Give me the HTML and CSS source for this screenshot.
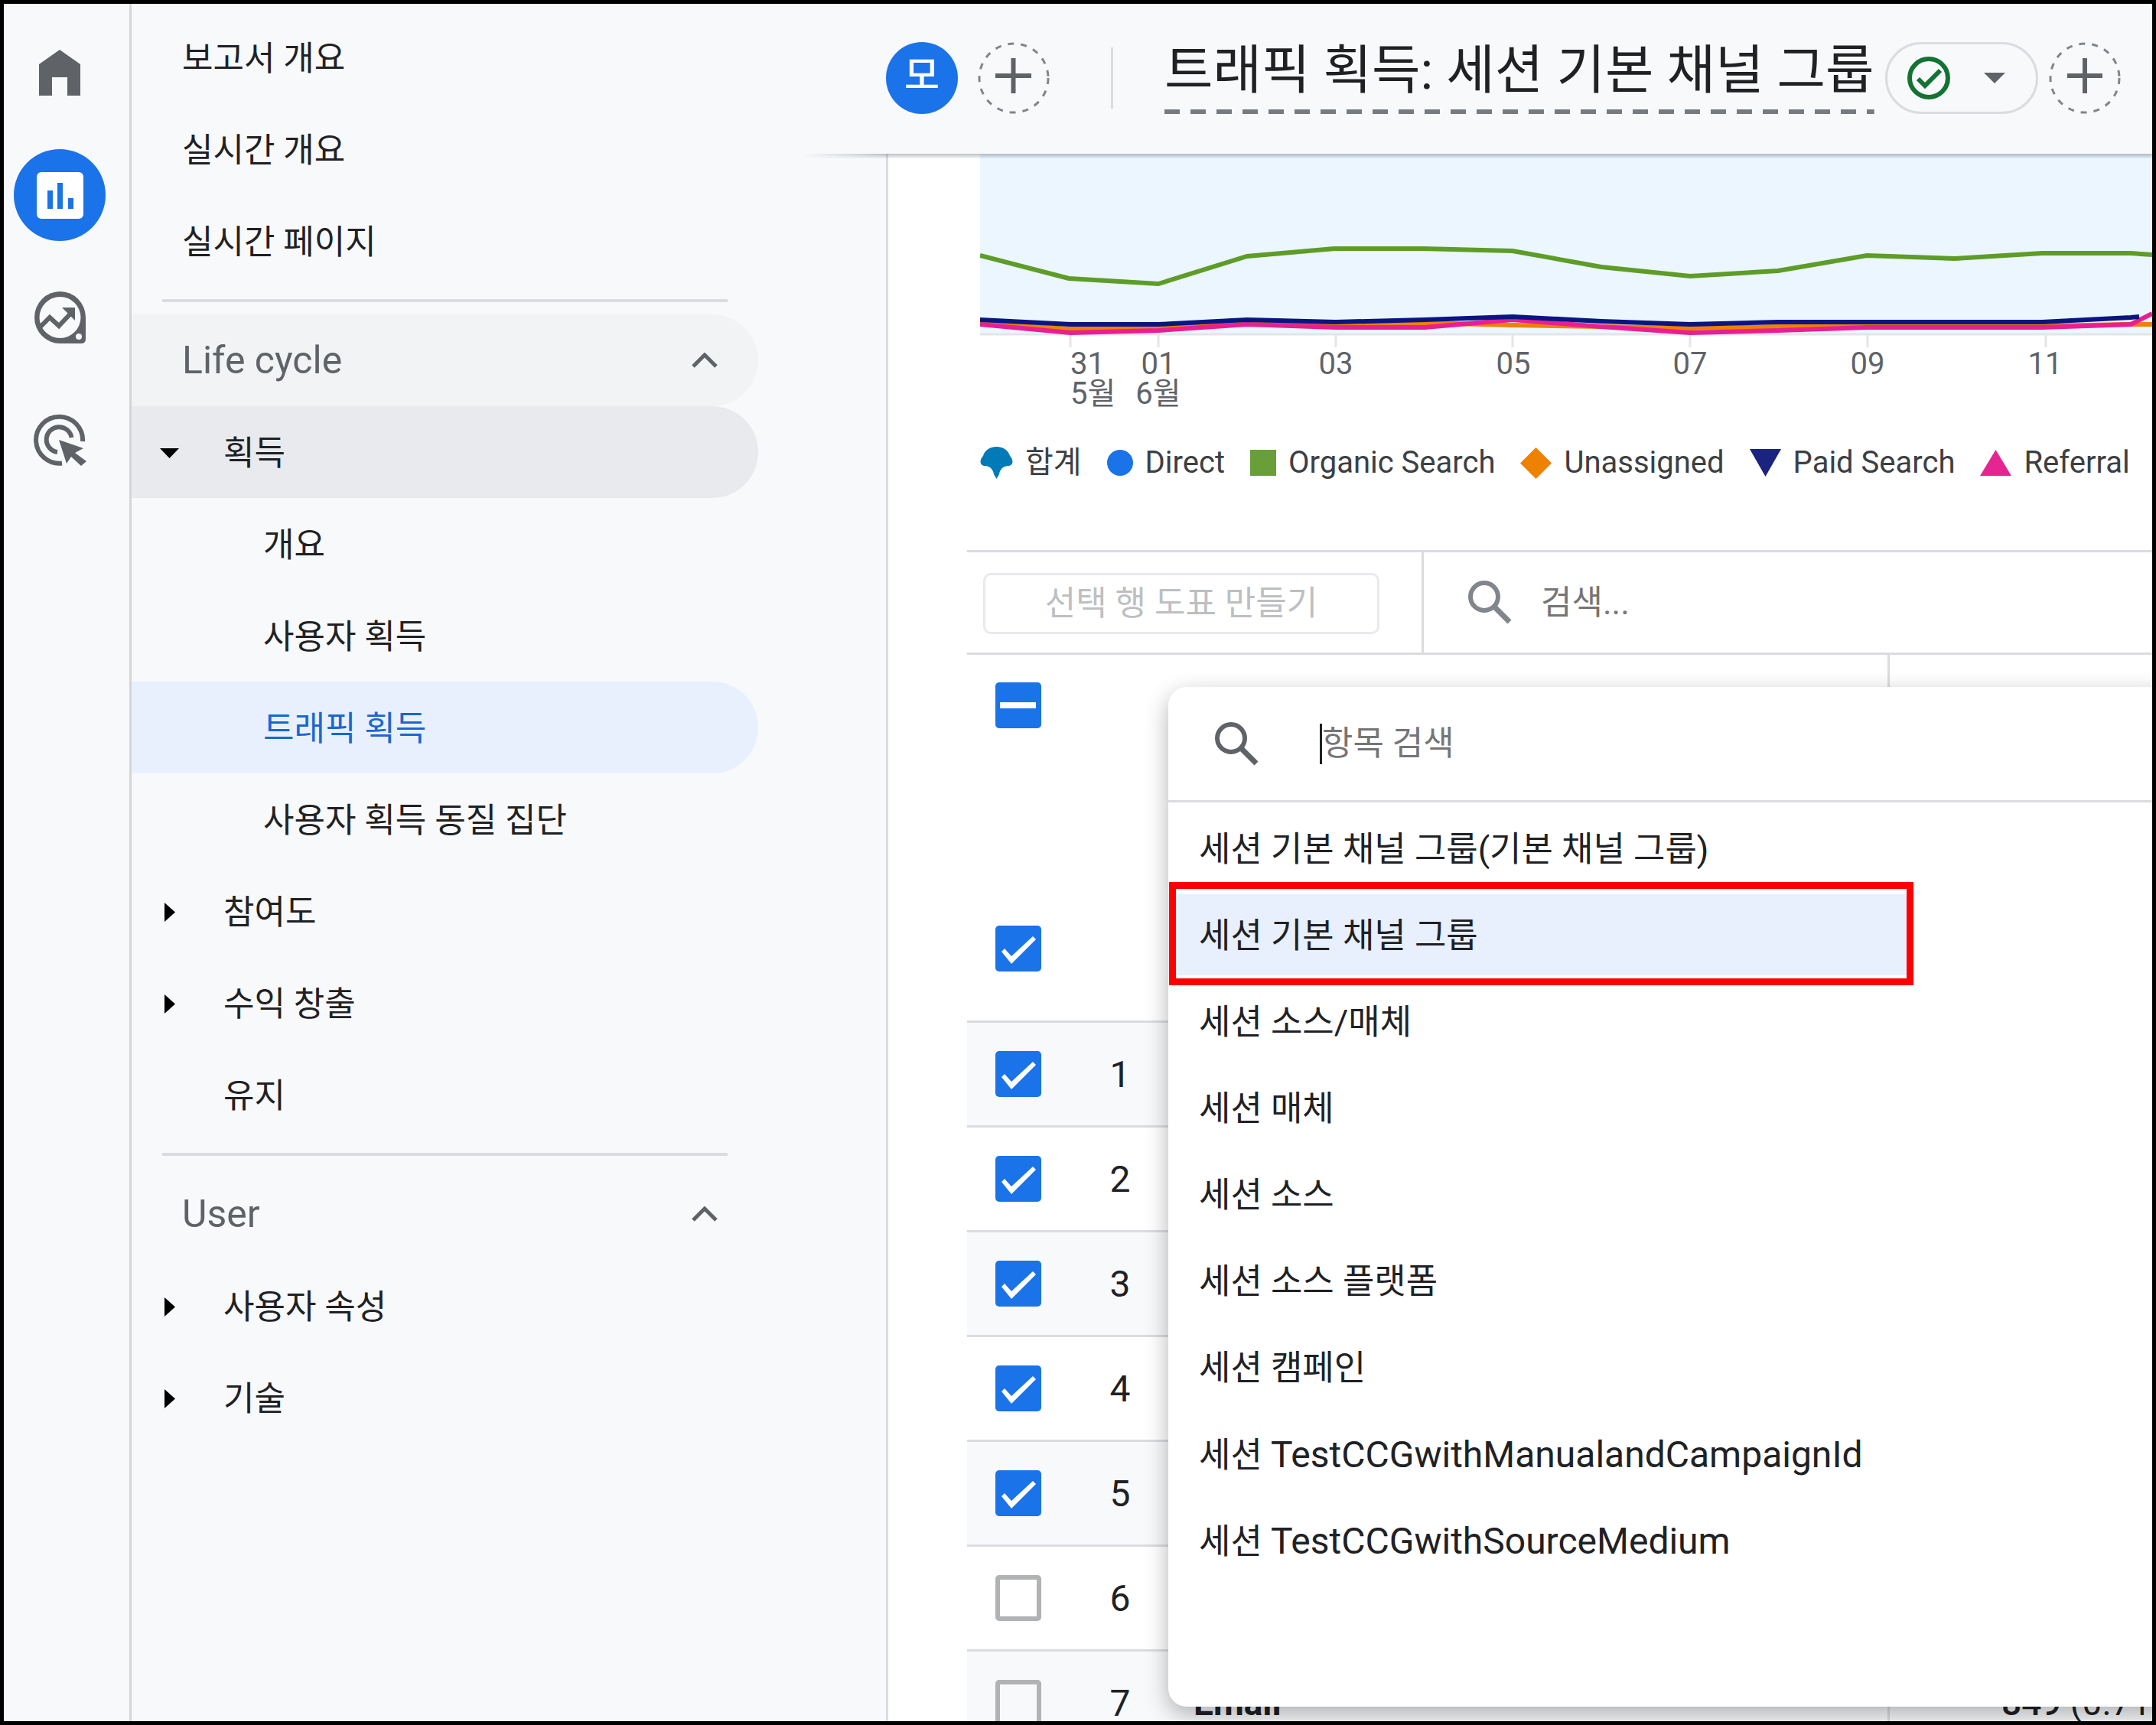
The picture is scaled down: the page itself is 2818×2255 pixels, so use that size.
FILE: index.html
```html
<!DOCTYPE html>
<html lang="ko">
<head>
    <meta charset="UTF-8">
    <meta name="viewport" content="width=device-width, initial-scale=1.0">
    <title>트래픽 획득</title>
    <link rel="stylesheet" href="styles.css">
</head>
<body>
    <aside class="rail">
        <button class="rail_button" aria-label="Home">
            <svg width="54" height="60" viewBox="0 0 54 60"><path d="M0 19 27 0l27 19v41H37V36H17v24H0z" fill="#5f6368"/></svg>
        </button>
        <button class="rail_button active" aria-label="Reports">
            <svg width="61" height="61" viewBox="0 0 61 61">
                <rect width="61" height="61" rx="6" fill="#fff"/>
                <path d="M14 24h7v24h-7zM27 14h7v34h-7zM41 34h7v14h-7z" fill="#1a73e8"/>
            </svg>
        </button>
        <button class="rail_button" aria-label="Explore">
            <svg width="67" height="68" viewBox="0 0 67 68">
                <path fill="#5f6368" fill-rule="evenodd" d="M33.500 0A33.500 34 0 0 0 33.500 68H61q6 0 6-6V34A33.500 34 0 0 0 33.500 0zM33.500 7a27 27 0 1 1 0 54a27 27 0 1 1 0-54z"/>
                <path d="M5 49 20 34l12 11 18-19" fill="none" stroke="#5f6368" stroke-width="6"/>
                <path d="M36 21h17v17z" fill="#5f6368"/>
                <circle cx="58" cy="59" r="4" fill="#f8f9fb"/>
            </svg>
        </button>
        <button class="rail_button" aria-label="Advertising">
            <svg width="69" height="68" viewBox="0 0 69 68">
                <g fill="none" stroke="#5f6368" stroke-width="6">
                    <path d="M64 36A30.500 30.500 0 1 0 37 64.500"/>
                    <path d="M49.500 31A16.500 16.500 0 1 0 31 50"/>
                </g>
                <path d="M33 34 65 45 54 51 69 62 62 68 49 56 43 65z" fill="#5f6368"/>
            </svg>
        </button>
    </aside>

    <nav class="side_nav">
        <a class="nav_item" href="#">보고서 개요</a>
        <a class="nav_item" href="#">실시간 개요</a>
        <a class="nav_item" href="#">실시간 페이지</a>
        <hr>
        <button class="nav_item nav_head hovered">
            Life cycle
            <svg width="34" height="20" viewBox="0 0 34 20"><path d="M2 18 17 3l15 15" fill="none" stroke="#5f6368" stroke-width="5"/></svg>
        </button>
        <a class="nav_item level1 open" href="#">
            <svg class="caret" width="25" height="13" viewBox="0 0 25 13"><path d="M0 0h25L12.500 13z"/></svg>획득
        </a>
        <a class="nav_item level2" href="#">개요</a>
        <a class="nav_item level2" href="#">사용자 획득</a>
        <a class="nav_item level2 selected" href="#">트래픽 획득</a>
        <a class="nav_item level2" href="#">사용자 획득 동질 집단</a>
        <a class="nav_item level1" href="#">
            <svg class="caret" width="25" height="25" viewBox="0 0 25 25"><path d="M6 0v25l14-12.500z"/></svg>참여도
        </a>
        <a class="nav_item level1" href="#">
            <svg class="caret" width="25" height="25" viewBox="0 0 25 25"><path d="M6 0v25l14-12.500z"/></svg>수익 창출
        </a>
        <a class="nav_item level1" href="#"><span class="caret"></span>유지</a>
        <hr>
        <button class="nav_item nav_head">
            User
            <svg width="34" height="20" viewBox="0 0 34 20"><path d="M2 18 17 3l15 15" fill="none" stroke="#5f6368" stroke-width="5"/></svg>
        </button>
        <a class="nav_item level1" href="#">
            <svg class="caret" width="25" height="25" viewBox="0 0 25 25"><path d="M6 0v25l14-12.500z"/></svg>사용자 속성
        </a>
        <a class="nav_item level1" href="#">
            <svg class="caret" width="25" height="25" viewBox="0 0 25 25"><path d="M6 0v25l14-12.500z"/></svg>기술
        </a>
    </nav>

    <main class="report">
        <header class="report_header">
            <button class="segment">모</button>
            <button class="add_button" aria-label="Add comparison">
                <svg width="94" height="94" viewBox="0 0 94 94">
                    <circle cx="47" cy="47" r="45" fill="none" stroke="#80868b" stroke-width="3" stroke-dasharray="8 9"/>
                    <path d="M23 44h47M46.500 21v46" stroke="#5f6368" stroke-width="6"/>
                </svg>
            </button>
            <span class="header_line"></span>
            <h1>트래픽 획득: 세션 기본 채널 그룹</h1>
            <button class="status" aria-label="Data quality">
                <svg width="56" height="56" viewBox="0 0 56 56">
                    <circle cx="28" cy="28" r="25" fill="none" stroke="#137333" stroke-width="6"/>
                    <path d="M14 29l9 9 20-20" fill="none" stroke="#137333" stroke-width="6"/>
                </svg>
                <svg width="28" height="14" viewBox="0 0 28 14"><path d="M0 0h28L14 14z" fill="#5f6368"/></svg>
            </button>
            <button class="add_button" aria-label="Add filter">
                <svg width="94" height="94" viewBox="0 0 94 94">
                    <circle cx="47" cy="47" r="45" fill="none" stroke="#80868b" stroke-width="3" stroke-dasharray="8 9"/>
                    <path d="M24 44h46M47 21v46" stroke="#5f6368" stroke-width="6"/>
                </svg>
            </button>
        </header>

        <section class="report_body">
            <div class="chart">
                <svg viewBox="0 0 1532 340">
                    <rect width="1532" height="236" fill="#ebf6fe"/>
                    <path d="M0 236h1532M118 236v17M233 236v17M465 236v17M696 236v17M928 236v17M1160 236v17M1393 236v17" stroke="#e3e5e8" stroke-width="3"/>
                    <g fill="none" stroke-width="6">
                        <polyline stroke="#5e9c28" points="0,133 116,163 233,170 349,134 463,124 579,124 696,127 812,148 928,160 1043,153 1159,133 1274,137 1388,130 1504,130 1532,132"/>
                        <polyline stroke="#ee8100" points="0,222 118,229 233,228 349,221 465,223 581,221 696,224 812,226 928,228 1043,226 1159,225 1388,225 1504,223 1532,223"/>
                        <polyline stroke="#e91e92" points="0,223 118,234 233,231 349,223 465,227 581,227 696,217 812,226 928,234 1043,231 1159,227 1388,227 1504,223 1532,209"/>
                        <polyline stroke="#0b1580" points="0,217 118,223 233,223 349,217 465,220 581,217 696,213 812,219 928,223 1043,220 1388,220 1504,214 1515,213"/>
                    </g>
                    <g class="axis_text">
                        <text x="118" y="288">31</text>
                        <text x="118" y="327">5월</text>
                        <g text-anchor="middle">
                            <text x="233" y="288">01</text>
                            <text x="233" y="327">6월</text>
                            <text x="465" y="288">03</text>
                            <text x="697" y="288">05</text>
                            <text x="928" y="288">07</text>
                            <text x="1160" y="288">09</text>
                            <text x="1392" y="288">11</text>
                        </g>
                    </g>
                </svg>
                <ul class="legend">
                    <li><svg width="43" height="42" viewBox="0 0 43 42"><path d="M21.500 0C31 0 37 5 39 12c5 5 5 13-3 13-7 1-10 5-11 11l-3.500 6L18 36C17 30 14 26 7 25c-8 0-8-8-3-13C6 5 12 0 21.500 0z" fill="#007bb8"/></svg>합계</li>
                    <li><svg width="34" height="34" viewBox="0 0 34 34"><circle cx="17" cy="17" r="17" fill="#1a73e8"/></svg>Direct</li>
                    <li><svg width="34" height="34" viewBox="0 0 34 34"><path d="M0 0h34v34H0z" fill="#689f38"/></svg>Organic Search</li>
                    <li><svg width="41" height="41" viewBox="0 0 41 41"><path d="M20.500 0 41 20.500 20.500 41 0 20.500z" fill="#ee8100"/></svg>Unassigned</li>
                    <li><svg width="41" height="36" viewBox="0 0 41 36"><path d="M0 0h41L20.500 36z" fill="#1a237e"/></svg>Paid Search</li>
                    <li><svg width="41" height="34" viewBox="0 0 41 34"><path d="M0 34h41L20.500 0z" fill="#e52592"/></svg>Referral</li>
                </ul>
            </div>

            <div class="table_area">
                <div class="toolbar">
                    <div class="toolbar_plot">
                        <button class="plot_button" disabled>선택 행 도표 만들기</button>
                    </div>
                    <label class="table_search">
                        <svg width="58" height="57" viewBox="0 0 58 57" fill="none" stroke="#80868b"><circle cx="22" cy="21" r="18" stroke-width="6"/><path d="M35 34l20 20" stroke-width="7"/></svg>
                        <input type="text" placeholder="검색..." aria-label="검색">
                    </label>
                </div>

                <div class="table_wrap">
                    <table>
                        <colgroup>
                            <col class="col_check">
                            <col class="col_num">
                            <col class="col_name">
                            <col>
                        </colgroup>
                        <thead>
                            <tr class="head_row">
                                <th><input type="checkbox" class="mixed" aria-label="All rows"></th>
                                <th></th>
                                <th class="name"></th>
                                <th></th>
                            </tr>
                        </thead>
                        <tbody>
                            <tr class="total_row"><td><input type="checkbox" aria-label="Total" checked></td><td></td><td class="name"></td><td></td></tr>
                            <tr><td><input type="checkbox" aria-label="Row 1" checked></td><td class="num">1</td><td class="name"></td><td></td></tr>
                            <tr><td><input type="checkbox" aria-label="Row 2" checked></td><td class="num">2</td><td class="name"></td><td></td></tr>
                            <tr><td><input type="checkbox" aria-label="Row 3" checked></td><td class="num">3</td><td class="name"></td><td></td></tr>
                            <tr><td><input type="checkbox" aria-label="Row 4" checked></td><td class="num">4</td><td class="name"></td><td></td></tr>
                            <tr><td><input type="checkbox" aria-label="Row 5" checked></td><td class="num">5</td><td class="name"></td><td></td></tr>
                            <tr><td><input type="checkbox" aria-label="Row 6"></td><td class="num">6</td><td class="name"></td><td></td></tr>
                            <tr><td><input type="checkbox" aria-label="Row 7"></td><td class="num">7</td><td class="name">Email</td><td class="metric"><b>849</b> (0.71%)</td></tr>
                        </tbody>
                    </table>

                    <div class="menu">
                        <label class="menu_search">
                            <svg width="58" height="57" viewBox="0 0 58 57" fill="none" stroke="#5f6368"><circle cx="22" cy="21" r="18" stroke-width="6"/><path d="M35 34l20 20" stroke-width="7"/></svg>
                            <input type="text" placeholder="항목 검색" aria-label="항목 검색">
                        </label>
                        <ul class="menu_list">
                            <li>세션 기본 채널 그룹(기본 채널 그룹)</li>
                            <li class="current">세션 기본 채널 그룹</li>
                            <li>세션 소스/매체</li>
                            <li>세션 매체</li>
                            <li>세션 소스</li>
                            <li>세션 소스 플랫폼</li>
                            <li>세션 캠페인</li>
                            <li>세션 <span class="latin">TestCCGwithManualandCampaignId</span></li>
                            <li>세션 <span class="latin">TestCCGwithSourceMedium</span></li>
                        </ul>
                    </div>
                </div>
            </div>
        </section>
    </main>
</body>
</html>
```

FILE: styles.css
```css
* {
    margin: 0;
    padding: 0;
    box-sizing: border-box;
}
body {
    display: flex;
    height: 100vh;
    border: 5px solid #000;
    overflow: hidden;
    background: #f8f9fb;
    color: #202124;
    font-family: Roboto, "Noto Sans CJK KR", sans-serif;
    font-size: 44px;
}
button, input {
    font: inherit;
    color: inherit;
    border: none;
    background: none;
}
a {
    color: inherit;
    text-decoration: none;
}
ul {
    list-style: none;
}
svg {
    display: block;
    flex-shrink: 0;
}

/* icon rail */
.rail {
    flex: 0 0 167px;
    display: flex;
    flex-direction: column;
    gap: 40px;
    padding: 30px 0 0 13px;
    border-right: 3px solid #d3d5d7;
}
.rail_button {
    display: flex;
    align-items: center;
    justify-content: center;
    width: 120px;
    height: 120px;
    border-radius: 50%;
}
.rail_button.active {
    background: #1a73e8;
}

/* side navigation */
.side_nav {
    flex: 0 0 986px;
    padding: 10px 167px 0 0;
}
.side_nav hr {
    height: 4px;
    margin: 16px 40px;
    border: none;
    background: #dadce0;
}
.nav_item {
    display: flex;
    align-items: center;
    width: 100%;
    height: 120px;
    padding-left: 66px;
    padding-bottom: 4px;
    border-radius: 0 60px 60px 0;
}
.nav_head {
    justify-content: space-between;
    padding-right: 53px;
    padding-bottom: 0;
    color: #5f6368;
    font-size: 50px;
}
.hovered {
    background: #f1f3f4;
}
.level1 {
    padding-left: 37px;
}
.level1.open {
    background: #e8eaed;
}
.caret {
    width: 25px;
    margin-top: 6px;
    margin-right: 58px;
}
.level2 {
    padding-left: 172px;
}
.level2.selected {
    background: #e8f0fe;
    color: #1967d2;
}

/* report header */
.report {
    flex: 1;
    min-width: 0;
    display: flex;
    flex-direction: column;
}
.report_header {
    position: relative;
    z-index: 1;
    flex-shrink: 0;
    display: flex;
    align-items: center;
    height: 196px;
    padding-bottom: 3px;
    background: #f8f9fb;
}
.report_header::after {
    content: "";
    position: absolute;
    top: 100%;
    left: -110px;
    right: 0;
    height: 6px;
    background: linear-gradient(rgba(60, 80, 90, 0.35), rgba(60, 80, 90, 0.05));
    mask-image: linear-gradient(90deg, transparent, #000 110px);
}
.segment {
    width: 94px;
    height: 94px;
    padding-bottom: 6px;
    border-radius: 50%;
    background: #1a73e8;
    color: #fff;
    font-size: 50px;
    font-weight: 500;
    line-height: 80px;
}
.add_button {
    margin-left: 26px;
}
.header_line {
    width: 3px;
    height: 80px;
    margin: 0 67px 0 80px;
    background: #dadce0;
}
h1 {
    padding-bottom: 18px;
    font-size: 69px;
    font-weight: 400;
    line-height: 76px;
    white-space: nowrap;
    background: repeating-linear-gradient(90deg, #757b80 0 20px, transparent 20px 34px) bottom / 100% 6px no-repeat;
}
.status {
    display: flex;
    align-items: center;
    justify-content: space-between;
    width: 200px;
    height: 94px;
    margin-left: 14px;
    padding: 0 40px 0 26px;
    border: 3px solid #dadce0;
    border-radius: 47px;
}
.status + .add_button {
    margin-left: 14px;
}

/* chart */
.report_body {
    flex: 1;
    min-height: 0;
    overflow: hidden;
    border-left: 3px solid #dadce0;
    background: #fff;
}
.chart {
    margin-left: 120px;
}
.chart > svg {
    width: 100%;
}
.axis_text {
    fill: #5f6368;
    font-size: 40px;
}
.legend {
    display: flex;
    gap: 33px;
    padding: 41px 0 91px;
    color: #3c4043;
    font-size: 40px;
    line-height: 46px;
    white-space: nowrap;
}
.legend li {
    display: flex;
    align-items: center;
    gap: 16px;
}

/* table */
.table_area {
    margin-left: 103px;
}
.toolbar {
    display: flex;
    height: 137px;
    border-top: 3px solid #dadce0;
    border-bottom: 3px solid #dadce0;
}
.toolbar_plot {
    width: 597px;
    padding: 27px 21px;
    border-right: 3px solid #dadce0;
}
.plot_button {
    width: 518px;
    height: 80px;
    border: 3px solid #e8eaed;
    border-radius: 10px;
    color: #bdbfc1;
    line-height: 70px;
}
.table_search {
    flex: 1;
    display: flex;
    align-items: center;
    gap: 38px;
    padding-left: 57px;
}
input::placeholder {
    color: #757575;
    opacity: 1;
}
.table_wrap {
    position: relative;
}
table {
    width: 100%;
    table-layout: fixed;
    border-collapse: separate;
    border-spacing: 0;
    font-size: 48px;
}
.col_check {
    width: 134px;
}
.col_num {
    width: 132px;
}
.col_name {
    width: 940px;
}
td, th {
    height: 137px;
    border-bottom: 3px solid #dadce0;
    text-align: left;
}
td:first-child, th:first-child {
    padding-left: 37px;
}
.head_row th {
    height: 290px;
    padding-top: 36px;
    border-bottom: none;
    vertical-align: top;
}
.total_row td {
    height: 191px;
}
tbody tr:nth-child(even) {
    background: #f8f9fb;
}
.num {
    text-align: center;
}
.name {
    padding-left: 30px;
    border-right: 3px solid #dadce0;
    font-size: 46px;
    font-weight: 700;
}
.metric {
    padding-left: 146px;
    font-size: 46px;
    white-space: nowrap;
}
.metric b {
    font-weight: 500;
}
input[type="checkbox"] {
    appearance: none;
    display: block;
    width: 60px;
    height: 60px;
    border: 6px solid #b0b2b4;
    border-radius: 5px;
}
input[type="checkbox"]:checked, input[type="checkbox"].mixed {
    border: none;
    background: #1a73e8;
}
input[type="checkbox"]:checked::before, .mixed::before {
    content: "";
    display: block;
    width: 60px;
    height: 60px;
    background: #fff;
    clip-path: polygon(8px 34px, 12px 30px, 21px 40px, 49px 14px, 53px 18px, 21px 50px);
}
input.mixed::before {
    clip-path: inset(26px 7px 26px 6px);
}

/* dimension menu */
.menu {
    position: absolute;
    top: 42px;
    left: 263px;
    right: -40px;
    padding-bottom: 165px;
    border-radius: 24px;
    background: #fff;
    box-shadow: 0 10px 30px rgba(0, 0, 0, 0.3);
}
.menu_search {
    display: flex;
    align-items: center;
    gap: 80px;
    height: 151px;
    padding-left: 60px;
    border-bottom: 3px solid #dadce0;
}
.menu_search input {
    height: 53px;
    border-left: 3px solid #202124;
}
.menu_list {
    display: flex;
    flex-direction: column;
    gap: 7px;
    width: 970px;
    padding-top: 7px;
}
.menu_list li {
    position: relative;
    height: 106px;
    padding-left: 40px;
    font-size: 45px;
    line-height: 110px;
    white-space: nowrap;
}
.menu_list .current {
    background: #e8effd;
}
/* red highlight frame */
.menu_list .current::after {
    content: "";
    position: absolute;
    inset: -16px -4px -13px 1px;
    border: 9px solid #f00;
}
.latin {
    font-size: 48px;
}
```
